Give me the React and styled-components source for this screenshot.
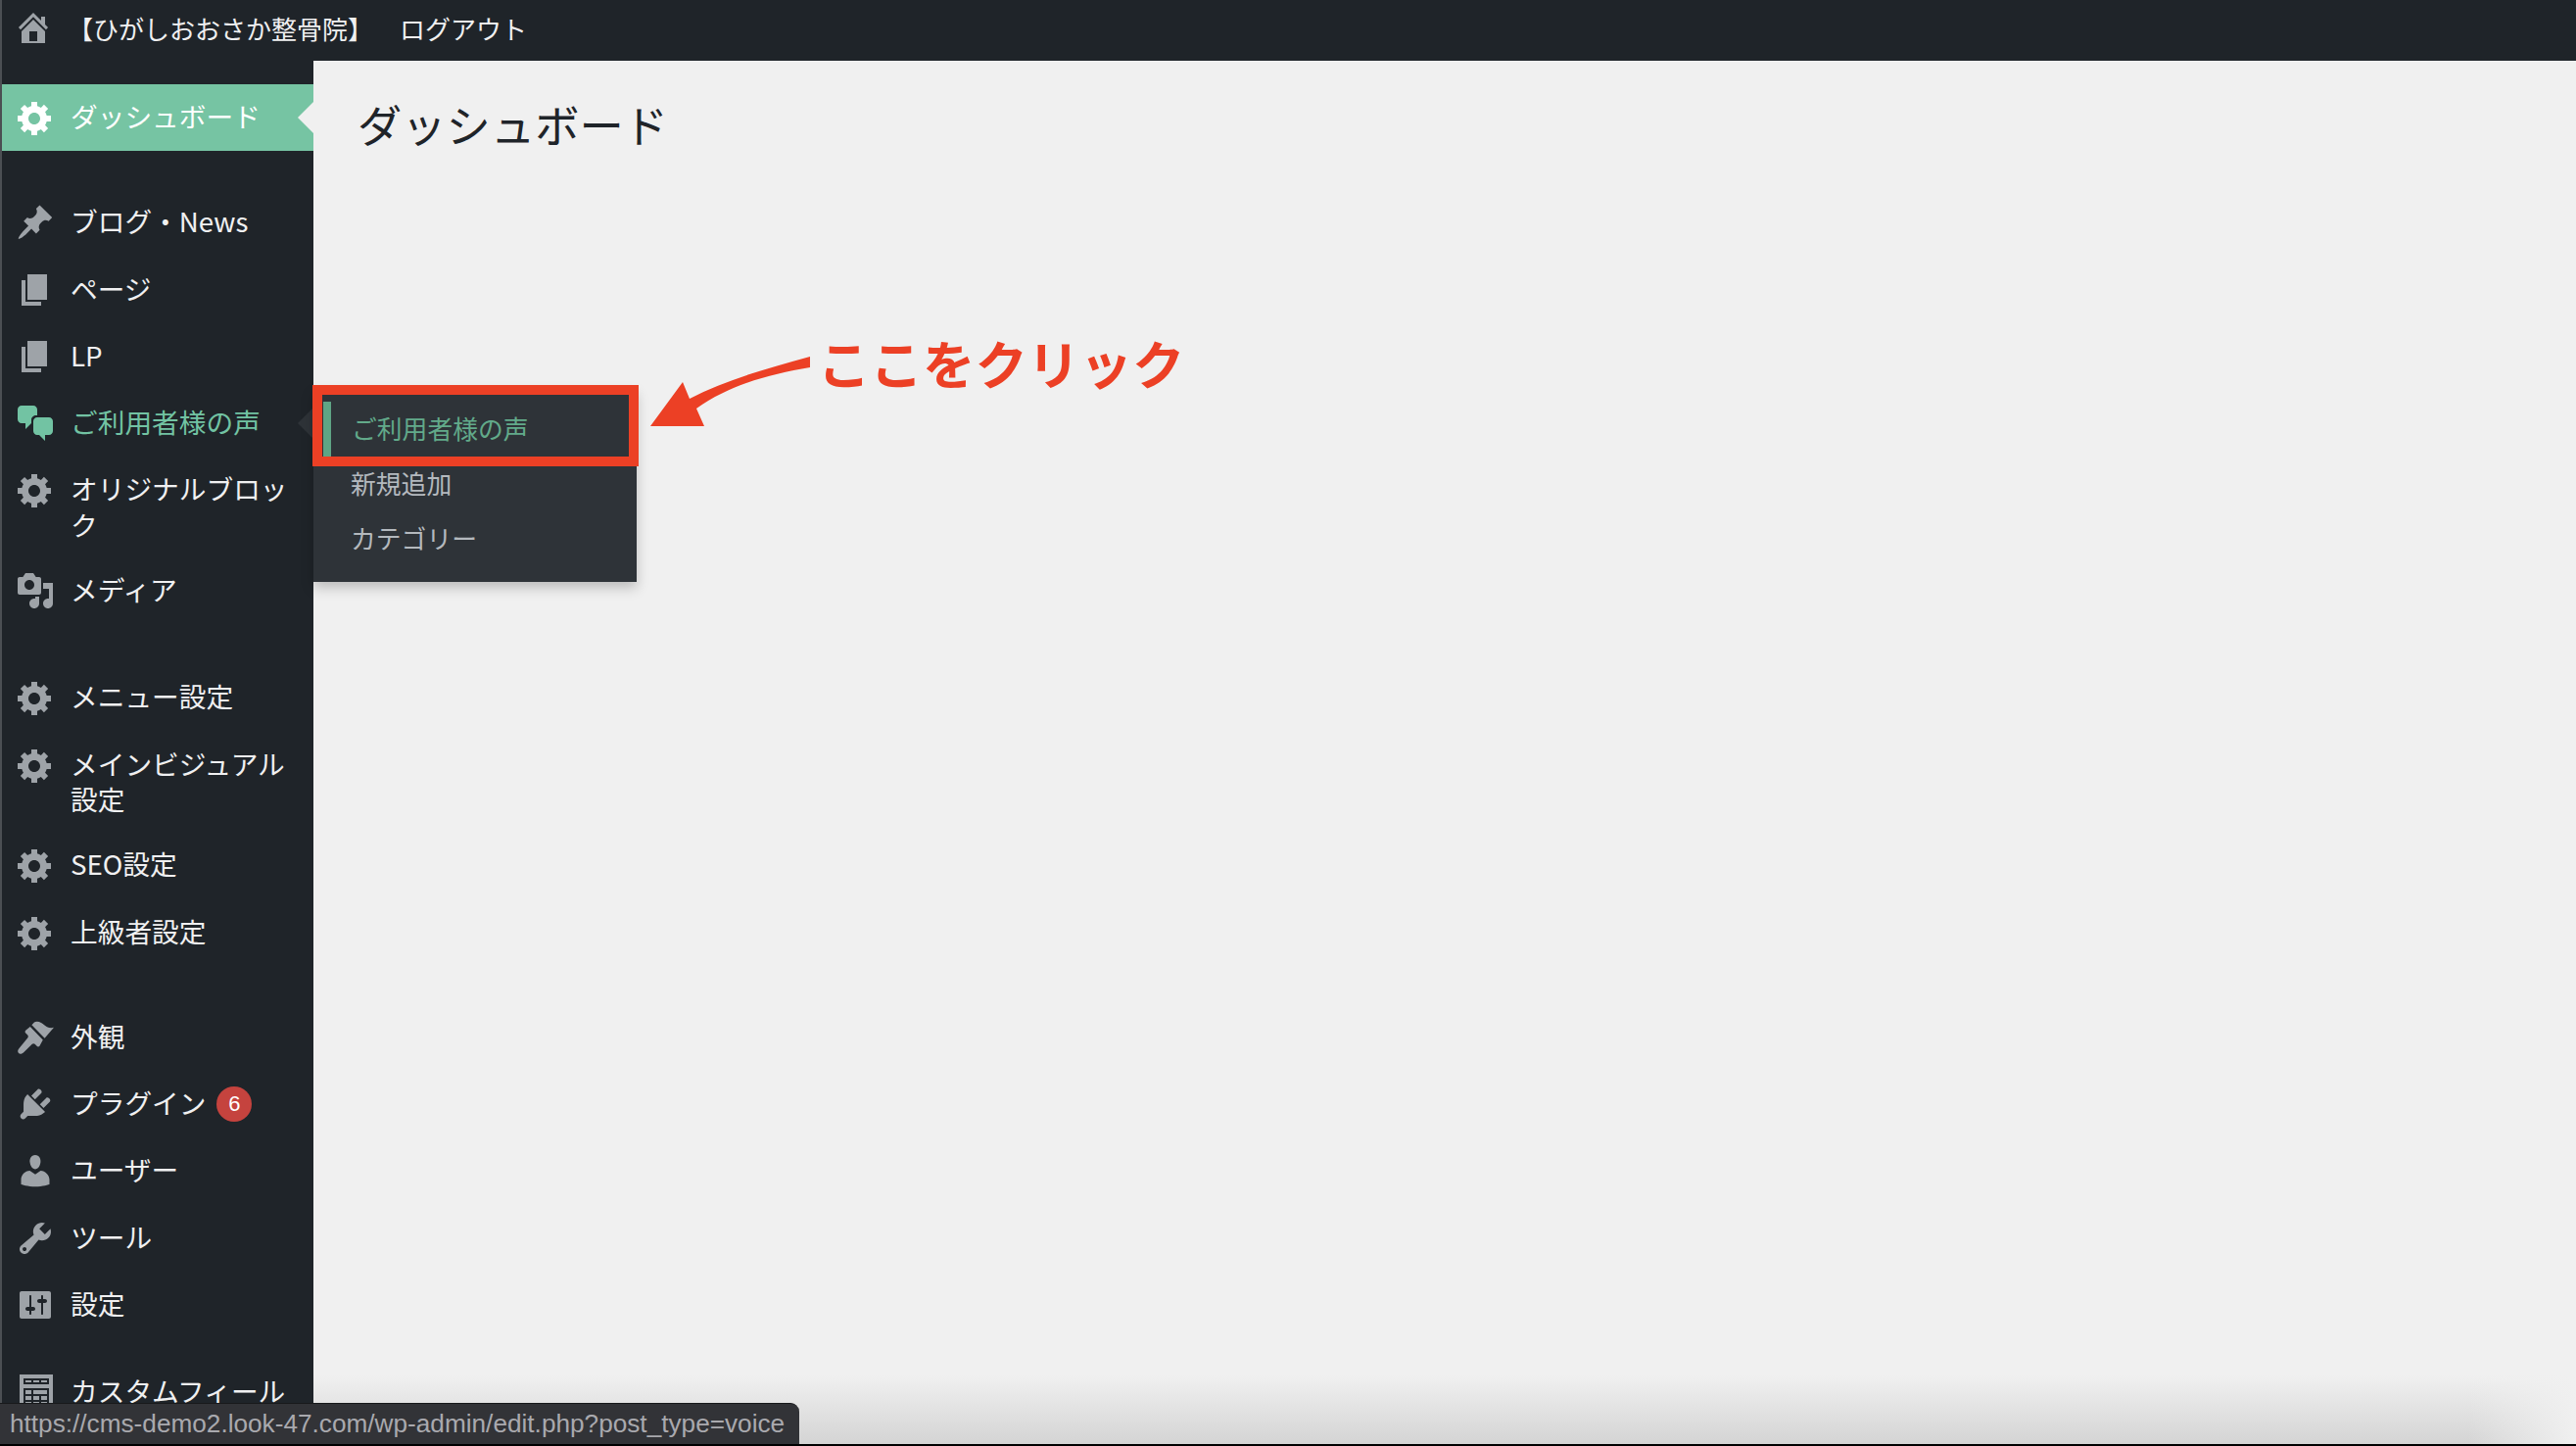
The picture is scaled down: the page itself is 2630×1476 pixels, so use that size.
import React from 'react';
import styled, { createGlobalStyle } from 'styled-components';

const GlobalStyle = createGlobalStyle`
  html, body {
    margin: 0;
    padding: 0;
    background: #f0f0f0;
    overflow: hidden;
  }
  * {
    box-sizing: border-box;
  }
`;

const JP = `"Noto Sans CJK JP", "Noto Sans", sans-serif`;

const ICONS = {
  home: 'M16 8.5l1.53 1.53-1.06 1.06L10 4.62l-6.47 6.47-1.06-1.06L10 2.5l4 4v-2h2v4zm-6-2.46l6 5.99V18H4v-5.97zM12 17v-5H8v5h4z',
  gear: 'M18 12h-2.18c-.17.7-.44 1.35-.81 1.93l1.54 1.54-2.1 2.1-1.54-1.54c-.58.36-1.23.63-1.91.79V19H8v-2.18c-.68-.16-1.33-.43-1.91-.79l-1.54 1.54-2.12-2.12 1.54-1.54c-.36-.58-.63-1.23-.79-1.91H1V9.03h2.17c.16-.7.44-1.35.8-1.94L2.43 5.55l2.1-2.1 1.54 1.54c.58-.37 1.24-.64 1.93-.81V2h3v2.18c.68.16 1.33.43 1.91.79l1.54-1.54 2.12 2.12-1.54 1.54c.36.59.64 1.24.8 1.94H18V12zm-8.5 1.5c1.66 0 3-1.34 3-3s-1.34-3-3-3-3 1.34-3 3 1.34 3 3 3z',
  pin: 'M10.44 3.02l1.82-1.82 6.36 6.35-1.83 1.82c-1.05-.68-2.48-.57-3.41.36l-.75.75c-.92.93-1.04 2.35-.35 3.41l-1.83 1.82-2.41-2.41-2.8 2.79c-.42.42-3.38 2.71-3.8 2.29s1.86-3.39 2.28-3.81l2.79-2.79L4.1 9.36l1.83-1.82c1.05.69 2.48.57 3.4-.36l.75-.75c.93-.92 1.05-2.35.36-3.41z',
  page: 'M6 15V2h10v13H6zm-1 1h8v2H3V5h2v11z',
  chat: 'M11 6h-.82C9.07 6 8 7.2 8 8.16V10l-3 3v-3H3c-1.1 0-2-.9-2-2V3c0-1.1.9-2 2-2h6c1.1 0 2 .9 2 2v3zm0 1h6c1.1 0 2 .9 2 2v5c0 1.1-.9 2-2 2h-2v3l-3-3h-1c-1.1 0-2-.9-2-2V9c0-1.1.9-2 2-2z',
  media: 'M13 11V4c0-.55-.45-1-1-1h-1.67L9 1H5L3.67 3H2c-.55 0-1 .45-1 1v7c0 .55.45 1 1 1h10c.55 0 1-.45 1-1zM7 4.5c1.38 0 2.5 1.12 2.5 2.5S8.38 9.5 7 9.5 4.5 8.38 4.5 7 5.62 4.5 7 4.5zM14 6h5v10.5c0 1.38-1.12 2.5-2.5 2.5S14 17.88 14 16.5s1.12-2.5 2.5-2.5c.17 0 .34.02.5.05V9h-3V6zm-4 8.05V13h2v3.5c0 1.38-1.12 2.5-2.5 2.5S7 17.88 7 16.5 8.12 14 9.5 14c.17 0 .34.02.5.05z',
  brush: 'M14.8 10.4L8.2 3.6l1.3-1.3c.7-.6 2.4-.5 3.5.2 1.3.8 1.5 1.3 3 2.1 1 .5 2.4.7 3.5.3zM13.9 11.2L7.4 4.5 5.1 6.4c-.4.4-.4 1 0 1.4l1 1c.4.4.4 1 0 1.4L2 15.300c-.9.9-1.2 2-.5 2.7.7.7 1.8.4 2.7-.5l4.2-4.100c.4-.4 1-.4 1.400 0l1 1c.4.4 1 .4 1.400 0z',
  plug: 'M13.11 4.36L9.87 7.6 8 5.73l3.24-3.24c.35-.34 1.05-.2 1.56.32.52.51.66 1.21.31 1.55zm-8 1.77l.91-1.12 9.01 9.01-1.19.84c-.71.71-2.63 1.16-3.82 1.16H6.14L4.9 17.26c-.59.59-1.54.59-2.12 0-.59-.58-.59-1.53 0-2.12l1.24-1.24v-3.88c0-1.13.4-3.19 1.09-3.89zm7.26 3.97l3.24-3.24c.34-.35 1.04-.21 1.55.31.52.51.66 1.21.31 1.55l-3.24 3.25z',
  user: 'M10 9.25c-2.27 0-2.73-3.44-2.73-3.44C7 4.02 7.82 2 9.97 2c2.16 0 2.98 2.02 2.71 3.81 0 0-.41 3.44-2.68 3.44zm0 2.57L12.72 10c2.39 0 4.52 2.33 4.52 4.53v2.49s-3.65 1.13-7.24 1.13c-3.65 0-7.24-1.13-7.24-1.13v-2.49c0-2.25 1.94-4.48 4.47-4.48z',
  wrench: 'M16.68 9.77c-1.34 1.34-3.3 1.67-4.95.99l-5.41 6.52c-.99.99-2.59.99-3.58 0s-.99-2.59 0-3.57l6.52-5.42c-.68-1.65-.35-3.61.99-4.95 1.28-1.28 3.12-1.62 4.72-1.06l-2.89 2.89 2.82 2.82 2.86-2.87c.53 1.58.18 3.39-1.08 4.65zM3.81 16.21c.4.39 1.04.39 1.43 0 .4-.4.4-1.04 0-1.43-.39-.4-1.03-.4-1.43 0-.39.39-.39 1.03 0 1.43z',
  sliders: 'M18 16V4c0-.55-.45-1-1-1H3c-.55 0-1 .45-1 1v12c0 .55.45 1 1 1h14c.55 0 1-.45 1-1zM8 11h1c.55 0 1 .45 1 1s-.45 1-1 1H8v1.5c0 .28-.22.5-.5.5s-.5-.22-.5-.5V13H6c-.55 0-1-.45-1-1s.45-1 1-1h1V5.5c0-.28.22-.5.5-.5s.5.22.5.5V11zm5-2h-1c-.55 0-1-.45-1-1s.45-1 1-1h1V5.5c0-.28.22-.5.5-.5s.5.22.5.5V7h1c.55 0 1 .45 1 1s-.45 1-1 1h-1v5.5c0 .28-.22.5-.5.5s-.5-.22-.5-.5V9z',
  table: 'M2 1h17v19H2V1zm2 2v3h13V3H4zm1 1h3v1H5V4zm4 0h3v1H9V4zm4 0h3v1h-3V4zM4 8v10h13V8H4zm1 1h3v2H5V9zm4 0h7v2H9V9zm-4 3h3v2H5v-2zm4 0h3v2H9v-2zm4 0h3v2h-3v-2zm-8 3h3v2H5v-2zm4 0h3v2H9v-2zm4 0h3v2h-3v-2z'
};

const MENU = [
  { label: 'ダッシュボード', icon: 'gear', current: true, gap: 0 },
  { label: 'ブログ・News', icon: 'pin', gap: 39 },
  { label: 'ページ', icon: 'page' },
  { label: 'LP', icon: 'page' },
  { label: 'ご利用者様の声', icon: 'chat', open: true },
  { label: 'オリジナルブロック', icon: 'gear' },
  { label: 'メディア', icon: 'media' },
  { label: 'メニュー設定', icon: 'gear', gap: 41 },
  { label: 'メインビジュアル設定', icon: 'gear' },
  { label: 'SEO設定', icon: 'gear' },
  { label: '上級者設定', icon: 'gear' },
  { label: '外観', icon: 'brush', gap: 39 },
  { label: 'プラグイン', icon: 'plug', badge: 6 },
  { label: 'ユーザー', icon: 'user' },
  { label: 'ツール', icon: 'wrench' },
  { label: '設定', icon: 'sliders' },
  { label: 'カスタムフィールド', icon: 'table', gap: 21 }
];

const Frame = styled.div`
  position: relative;
  display: flex;
  flex-direction: column;
  width: 2630px;
  height: 1476px;
  overflow: hidden;
  background: #000;
  font-family: ${JP};
  padding-bottom: 2px;
`;

const TopBar = styled.header`
  display: flex;
  align-items: center;
  flex: 0 0 62px;
  padding: 0 0 6px 12px;
  background: #1f2429;
  border-left: 2px solid #4b4f53;
  color: #f0f0f1;
  font-size: 26px;
`;

const SiteName = styled.span`
  margin-left: 15px;
  width: 339px;
  white-space: nowrap;
`;

const Body = styled.div`
  display: flex;
  flex: 1;
  min-height: 0;
`;

const Sidebar = styled.nav`
  flex: 0 0 320px;
  display: flex;
  flex-direction: column;
  padding-top: 24px;
  background: #1f2429;
  border-left: 2px solid #4b4f53;
  overflow: hidden;
`;

const Item = styled.a`
  position: relative;
  display: flex;
  flex-shrink: 0;
  align-items: flex-start;
  margin-top: ${(p) => p.$gap || 0}px;
  padding: 14px 24px 14.25px 14px;
  color: ${(p) => (p.$current ? '#fff' : p.$open ? '#72c3a3' : '#f0f0f1')};
  background: ${(p) => (p.$current ? '#76c4a3' : 'transparent')};
  font-size: 27.7px;

  &::after {
    content: ${(p) => (p.$current || p.$open ? '""' : 'none')};
    position: absolute;
    right: 0;
    top: 18px;
    border-style: solid;
    border-width: 16px 16px 16px 0;
    border-color: transparent ${(p) => (p.$current ? '#f0f0f0' : '#2e3338')} transparent transparent;
  }
`;

const ItemIcon = styled.svg`
  flex: 0 0 40px;
  width: 40px;
  height: 40px;
  fill: ${(p) => (p.$current ? '#fff' : p.$open ? '#72c3a3' : '#9ea3a8')};
`;

const ItemLabel = styled.span`
  margin-left: 16px;
  width: 240px;
  line-height: 36.5px;
  padding-bottom: 1.5px;
`;

const Badge = styled.span`
  display: inline-flex;
  align-items: center;
  justify-content: center;
  width: 36px;
  height: 36px;
  margin: 2px 0 0 11px;
  border-radius: 50%;
  background: #c5433e;
  color: #fff;
  font-family: "Liberation Sans", Arial, sans-serif;
  font-size: 22px;
  vertical-align: top;
`;

const Main = styled.main`
  flex: 1;
  padding: 41px 0 0 45px;
  background:
    linear-gradient(to left, #f0f0f0, rgba(240, 240, 240, 0) 110px),
    linear-gradient(to bottom, #f0f0f0 calc(100% - 70px), #d4d4d4 100%);
`;

const Title = styled.h1`
  margin: 0;
  font-size: 45.3px;
  font-weight: 400;
  line-height: 46px;
  color: #1f2429;
`;

const Flyout = styled.ul`
  position: absolute;
  left: 320px;
  top: 396px;
  width: 330px;
  height: 198px;
  margin: 0;
  padding: 14px 0 0 10px;
  list-style: none;
  background: #2e3338;
  box-shadow: 0 6px 12px rgba(0, 0, 0, 0.22);
`;

const FlyoutItem = styled.li`
  height: 56px;
  padding: 0 0 3px ${(p) => (p.$active ? 21 : 28)}px;
  border-left: ${(p) => (p.$active ? '8px solid #5fa585' : 'none')};
  color: ${(p) => (p.$active ? '#62aa8a' : '#b4b9be')};
  font-size: 25.8px;
  line-height: 53px;
`;

const Highlight = styled.div`
  position: absolute;
  left: 319px;
  top: 393px;
  width: 333px;
  height: 83px;
  border: 10px solid #ec4025;
`;

const Callout = styled.div`
  position: absolute;
  left: 835px;
  top: 332px;
  color: #ec4025;
  font-size: 53.5px;
  font-weight: 700;
  line-height: 76px;
  white-space: nowrap;
`;

const CalloutArrow = styled.svg`
  position: absolute;
  left: 660px;
  top: 360px;
  width: 175px;
  height: 80px;
  fill: #ec4025;
`;

const StatusBar = styled.div`
  position: absolute;
  left: 0;
  bottom: 2px;
  width: 816px;
  height: 42px;
  padding-left: 10px;
  background: #323337;
  border-top: 1px solid #18191b;
  border-top-right-radius: 9px;
  color: #a9a9ae;
  font-family: "Liberation Sans", Arial, sans-serif;
  font-size: 26.2px;
  line-height: 40px;
  white-space: nowrap;
`;

function Dashicon({ name, current, open }) {
  return (
    <ItemIcon viewBox="0 0 20 20" $current={current} $open={open}>
      <path fillRule="evenodd" d={ICONS[name]} />
    </ItemIcon>
  );
}

export default function App() {
  return (
    <Frame>
      <GlobalStyle />
      <TopBar>
        <ItemIcon viewBox="0 0 20 20">
          <path d={ICONS.home} />
        </ItemIcon>
        <SiteName>【ひがしおおさか整骨院】</SiteName>
        <span>ログアウト</span>
      </TopBar>
      <Body>
        <Sidebar>
          {MENU.map((item) => (
            <Item key={item.label} $gap={item.gap} $current={item.current} $open={item.open}>
              <Dashicon name={item.icon} current={item.current} open={item.open} />
              <ItemLabel>
                {item.label}
                {item.badge && <Badge>{item.badge}</Badge>}
              </ItemLabel>
            </Item>
          ))}
        </Sidebar>
        <Main>
          <Title>ダッシュボード</Title>
        </Main>
      </Body>
      <Flyout>
        <FlyoutItem $active>ご利用者様の声</FlyoutItem>
        <FlyoutItem>新規追加</FlyoutItem>
        <FlyoutItem>カテゴリー</FlyoutItem>
      </Flyout>
      <Highlight />
      <Callout>ここをクリック</Callout>
      <CalloutArrow viewBox="0 0 175 80">
        <path d="M37 30L4 75H59L51 57C85 33 125 22 167 15V4C120 17 80 28 44 47Z" />
      </CalloutArrow>
      <StatusBar>https://cms-demo2.look-47.com/wp-admin/edit.php?post_type=voice</StatusBar>
    </Frame>
  );
}
